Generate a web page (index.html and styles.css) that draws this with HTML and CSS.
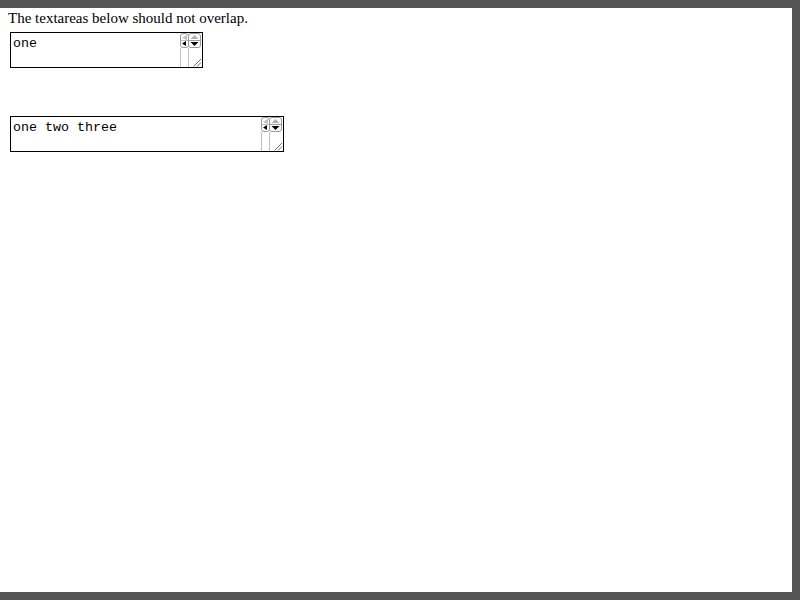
FILE: index.html
```html
<!DOCTYPE html>
<html>
<head>
<meta charset="utf-8">
<link rel="stylesheet" href="styles.css">
</head>
<body>
<div class="frame">
  <div class="note">The textareas below should not overlap.</div>
  <div class="ta ta-short">
    <div class="ta-text">one</div>
    <svg class="sb" width="22" height="34" viewBox="0 0 22 34">
      <rect x="0.5" y="0.5" width="8" height="14" rx="2.5" fill="#fff" stroke="#9a9a9a"/>
      <line x1="0.5" y1="7.5" x2="8.5" y2="7.5" stroke="#c0c0c0"/>
      <polygon points="2,5 7,1.5 7,7" fill="#c0c0c0"/>
      <polygon points="2,10.5 6,8 6,13" fill="#000"/>
      <rect x="8.5" y="0.5" width="12" height="14" rx="2.5" fill="#fff" stroke="#9a9a9a"/>
      <line x1="8.5" y1="7.5" x2="20.5" y2="7.5" stroke="#9a9a9a"/>
      <polygon points="10.5,6 14.5,2 18.5,6" fill="#b0b0b0"/>
      <polygon points="10.5,9 18.5,9 14.5,13" fill="#000"/>
      <line x1="0.5" y1="15" x2="0.5" y2="34" stroke="#c0c0c0"/>
      <line x1="8.5" y1="15" x2="8.5" y2="34" stroke="#c0c0c0"/>
      <line x1="13.5" y1="33.5" x2="21" y2="26" stroke="#707070"/>
      <line x1="17" y1="33.5" x2="21" y2="29.5" stroke="#707070"/>
    </svg>
  </div>
  <div class="ta ta-long">
    <div class="ta-text">one two three</div>
    <svg class="sb" width="22" height="34" viewBox="0 0 22 34">
      <rect x="0.5" y="0.5" width="8" height="14" rx="2.5" fill="#fff" stroke="#9a9a9a"/>
      <line x1="0.5" y1="7.5" x2="8.5" y2="7.5" stroke="#c0c0c0"/>
      <polygon points="2,5 7,1.5 7,7" fill="#c0c0c0"/>
      <polygon points="2,10.5 6,8 6,13" fill="#000"/>
      <rect x="8.5" y="0.5" width="12" height="14" rx="2.5" fill="#fff" stroke="#9a9a9a"/>
      <line x1="8.5" y1="7.5" x2="20.5" y2="7.5" stroke="#9a9a9a"/>
      <polygon points="10.5,6 14.5,2 18.5,6" fill="#b0b0b0"/>
      <polygon points="10.5,9 18.5,9 14.5,13" fill="#000"/>
      <line x1="0.5" y1="15" x2="0.5" y2="34" stroke="#c0c0c0"/>
      <line x1="8.5" y1="15" x2="8.5" y2="34" stroke="#c0c0c0"/>
      <line x1="13.5" y1="33.5" x2="21" y2="26" stroke="#707070"/>
      <line x1="17" y1="33.5" x2="21" y2="29.5" stroke="#707070"/>
    </svg>
  </div>
</div>
</body>
</html>
```
FILE: styles.css
```css
html, body {
  margin: 0;
  padding: 0;
  background: #fff;
}
.frame {
  box-sizing: border-box;
  width: 800px;
  height: 600px;
  border-top: 8px solid #555555;
  border-right: 8px solid #555555;
  border-bottom: 8px solid #555555;
  padding-left: 8px;
  display: flex;
  flex-direction: column;
  align-items: flex-start;
}
.note {
  font-family: "Liberation Serif", "Times New Roman", serif;
  font-size: 15px;
  line-height: 18px;
  padding-top: 1px;
  height: 17px;
  color: #000;
}
.ta {
  display: flex;
  border: 1px solid #000;
  height: 34px;
  margin-left: 2px;
  background: #fff;
}
.ta-short {
  width: 191px;
  margin-top: 6px;
}
.ta-long {
  width: 272px;
  margin-top: 48px;
}
.ta-text {
  flex: 1;
  font-family: "Liberation Mono", "Courier New", monospace;
  font-size: 13.333px;
  line-height: 15px;
  padding: 3px 2px 0 2px;
  color: #000;
  white-space: pre;
}
.sb {
  display: block;
  flex: none;
}
```
